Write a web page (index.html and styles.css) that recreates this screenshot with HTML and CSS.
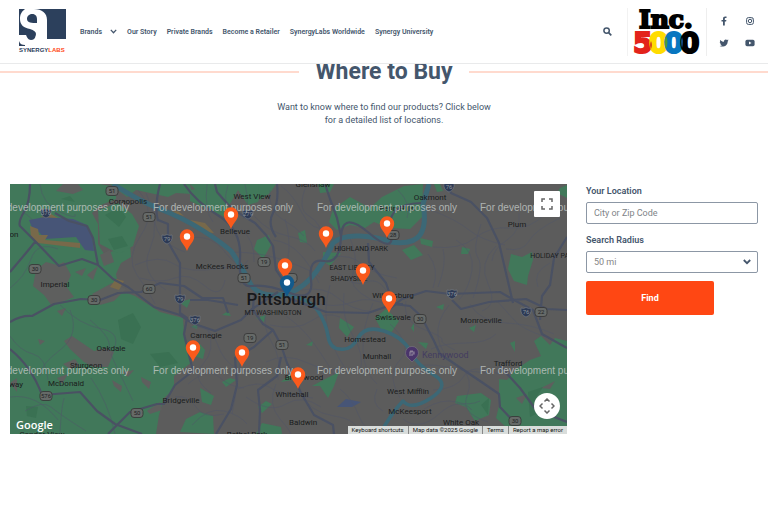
FILE: index.html
```html
<!DOCTYPE html>
<html lang="en">
<head>
<meta charset="utf-8">
<meta name="viewport" content="width=device-width, initial-scale=1">
<title>Where to Buy - SynergyLabs</title>
<link rel="stylesheet" href="styles.css">
</head>
<body>
<header class="site-header">
  <a class="brand" href="#" aria-label="SynergyLabs home">
    <svg class="brand-logo" viewBox="0 0 47 37" aria-hidden="true">
      <path d="M0 0H47V30H0ZM0 32C1 35 3 36 6 36V37H0Z" fill="#2c405c"/>
      <path d="M6 0C2 3 1 6 1 10C1 16 5 19 11 20C15 21 17 23 17 25C17 29 10 30 8 26L7 24H0V31H28V11C28 4 23 0 15 0Z" fill="#fff"/>
      <path d="M8 10C8 4 18 3 18 10V14C13 14 8 14 8 10ZM0 16C4 21 8 21 12 22C19 24 17 31 12 31C9 31 8 28 7 26H0Z" fill="#2c405c"/>
    </svg>
    <span class="brand-name">SYNERGY<b>LABS</b></span>
  </a>
  <nav class="main-nav" aria-label="Main">
    <a class="has-menu" href="#">Brands
      <svg class="caret" viewBox="0 0 7 5" aria-hidden="true"><path d="M.8.9 3.5 3.7 6.2.9" fill="none" stroke="#44566c" stroke-width="1.3"/></svg>
    </a>
    <a href="#">Our Story</a>
    <a href="#">Private Brands</a>
    <a href="#">Become a Retailer</a>
    <a href="#">SynergyLabs Worldwide</a>
    <a href="#">Synergy University</a>
  </nav>
  <button class="search-button" type="button" aria-label="Search">
    <svg viewBox="0 0 9 9" aria-hidden="true"><circle cx="3.6" cy="3.6" r="2.7" fill="none" stroke="#44566c" stroke-width="1.5"/><path d="M5.6 5.6 8.3 8.3" stroke="#44566c" stroke-width="1.7"/></svg>
  </button>
  <div class="award">
    <svg viewBox="0 0 66 48" role="img" aria-label="Inc. 5000">
      <text class="inc" x="5" y="20">Inc.</text>
      <g class="digits">
        <text x="-1" y="45" fill="#e3231b" stroke="#e3231b">5</text>
        <text x="15" y="45" fill="#ffdc00" stroke="#ffdc00">0</text>
        <text x="30" y="45" fill="#0876c0" stroke="#0876c0">0</text>
        <text x="46" y="45" fill="#000" stroke="#000">0</text>
      </g>
      <path d="M32 28Q35 34 32 41Q29 34 32 28Z" fill="#4c9c38"/>
      <path d="M17 33Q19 37 17 41Q15 37 17 33Z" fill="#d2481c"/>
      <path d="M48 29Q50 34 48 40Q46 34 48 29Z" fill="#124a80"/>
    </svg>
  </div>
  <div class="social">
    <a href="#" aria-label="Facebook"><svg viewBox="0 0 10 10"><path d="M4 9.5V5.6H2.5V4H4V2.8C4 1.2 4.9.5 6.2.5L7.5.6V2H6.7C6 2 5.8 2.4 5.8 2.9V4H7.4L7.1 5.6H5.8V9.5Z" fill="#44566c"/></svg></a>
    <a href="#" aria-label="Instagram"><svg viewBox="0 0 10 10"><rect x="1.6" y="1.6" width="6.8" height="6.8" rx="1.8" fill="none" stroke="#44566c"/><circle cx="5" cy="5" r="1.7" fill="none" stroke="#44566c"/><circle cx="7" cy="3" r=".5" fill="#44566c"/></svg></a>
    <a href="#" aria-label="Twitter"><svg viewBox="0 0 10 10"><path d="M1.2 1.9C2.3 3.1 3.5 3.7 4.9 3.8C4.6 1.5 7 .7 8.1 2L9.4 1.6 8.7 2.7 9.6 2.5 8.7 3.4C8.7 7.5 4.5 9.8.6 8 1.8 8 2.6 7.7 3.2 7.3 2.2 7.2 1.7 6.6 1.5 6H2.2C1.2 5.6.8 4.9.8 4L1.6 4.3C.8 3.6.8 2.7 1.2 1.9Z" fill="#44566c"/></svg></a>
    <a href="#" aria-label="YouTube"><svg viewBox="0 0 10 10"><rect x=".4" y="1.8" width="9.2" height="6.4" rx="1.6" fill="#44566c"/><path d="M4 3.6 6.5 5 4 6.4Z" fill="#fff"/></svg></a>
  </div>
</header>

<main>
  <section class="intro">
    <h1>Where to Buy</h1>
    <p>Want to know where to find our products? Click below for a detailed list of locations.</p>
  </section>

  <section class="locator">
    <div class="map">
      <svg class="map-canvas" viewBox="10 184 557 250" preserveAspectRatio="xMidYMid slice" role="img" aria-label="Map of stores around Pittsburgh">
        <defs>
          <g id="pin"><path d="M0 14C-2 8-7.200 5-7.200-.5A7.200 7.200 0 0 1 7.200-.5C7.200 5 2 8 0 14Z"/><circle r="3.200" cy="-.5" fill="#fff"/></g>
          <path id="shield" d="M-5-4Q-2.500-3 0-4.500Q2.500-3 5-4Q6 3 0 5Q-6 3-5-4Z" fill="#2d3a55" stroke="#777e86" stroke-width=".6"/>
          <rect id="route" x="-6" y="-4.500" width="12" height="9" rx="3" fill="#666a68" stroke="#333" stroke-width=".8"/>
        </defs>
        <rect x="10" y="184" width="557" height="250" fill="#5c5c5c"/>
        <g fill="#41785a">
          <path d="M10 184H100L116 187 116 199 101 205 92 213 98 224 98 244 104 254 117 250 130 243 131 257 121 263 116 274 119 290 135 296 160 312 183 318 184 334 188 355 192 362 174 376 174 389 164 398 159 415 156 434H10Z"/>
          <path d="M110 184H190L192 194 176 193 168 197 150 193 136 190 127 197Z"/>
          <path d="M98 210 118 203 132 214 139 226 133 246 119 254 100 244Z"/>
          <path d="M190 184H265L258 202 248 205 238 190 230 204 218 206 206 200Z"/>
          <path d="M190 190 211 187 226 205 236 214 225 217 203 207 190 201ZM258 184H276L270 193 260 200ZM318 184H334L330 192 320 193ZM333 209 350 197 370 208 382 197 404 186 423 184 422 217 410 229 389 228 374 222 365 228 350 225 337 230 329 222Z"/>
          <path d="M257 240 269 235 271 245 263 259 254 249ZM323 252 341 253 330 266 323 261ZM402 250 414 245 423 255 411 260ZM420 238 433 241 432 247 421 244ZM462 247 470 249 468 254 461 254ZM511 254 522 257 532 252 533 260 528 276 527 285 514 281 508 269ZM298 233 305 230 307 243 300 242Z"/>
          <path d="M340 318 354 327 347 337 339 328ZM306 345 313 341 312 346ZM312 386 329 377 339 372 334 386 328 398 320 386ZM375 318 386 309 399 321 391 333 382 331ZM418 342 428 343 426 349ZM457 396 481 393 491 400 489 415 475 421 466 407 455 403ZM469 328 476 325 474 332ZM510 343 515 341 515 352Z"/>
          <path d="M534 341 541 336 550 345 555 338 567 341V434H519L506 427 496 418 499 406 499 379 507 380 515 370 530 360 541 356Z"/>
          <path d="M191 345 200 344 205 350 203 359 194 356ZM191 327 198 323 197 329ZM200 388 214 396 211 405 202 402ZM222 382 230 378 236 380 226 387ZM258 407 266 401 272 404 262 413ZM281 382 290 374 293 380ZM256 434 262 423 281 427 282 434ZM180 432 186 419 200 412 213 416 214 434ZM256 318 266 315 264 322ZM179 302 191 299 187 308ZM222 315 228 311 231 316ZM436 307 444 304 443 310ZM411 328 414 323 414 332ZM434 184 440 184 443 191 437 192ZM560 188 567 185V198L557 193Z"/>
        </g>
        <g fill="#5e5f5e">
          <path d="M36 270 46 262 57 265 64 262 71 275 66 286 74 297 52 306 44 295 33 286ZM64 341 72 336 94 351 105 348 114 352 108 367 93 367 84 362 70 349ZM75 272 86 268 82 276ZM87 275 98 266 93 280ZM57 311 66 308 62 316ZM100 255 110 250 114 262 104 266ZM92 294 112 283 126 289 114 301 100 305ZM40 218 52 215 56 218 48 221Z"/>
          <path d="M112 380 122 386 121 392 114 386ZM141 377 151 382 149 389 142 382ZM147 411 160 402 162 410 150 414ZM57 378 68 374 62 384ZM10 383 17 378V392ZM123 372 134 370 128 377ZM38 339 45 341 40 345ZM63 184 78 184 83 190 73 194 56 191ZM63 364 75 359 80 366 70 369Z"/>
          <path d="M541 388 555 381 550 389ZM516 398 527 394 522 404Z"/>
        </g>
        <g fill="#386d50" opacity=".7"><path d="M105 215 119 207 126 217 119 227ZM108 239 122 236 128 246 114 250ZM118 320 133 313 141 327 133 344 121 339ZM26 406 38 407 36 418 27 416ZM481 405 489 398 488 415ZM528 392 543 387 535 399 544 410 530 417ZM61 199 70 196 75 202ZM150 354 169 352 178 363 160 367Z"/></g>
        <path d="M29 220 45 217 73 219 87 225 92 237 94 251 85 250 80 243 76 237 45 239 39 232 33 230Z" fill="#475577"/>
        <path d="M40 217 51 214 58 218ZM30 226 38 229 39 235 48 235 45 240 80 243 80 248 38 243 31 238ZM110 287 116 279 124 281 119 290ZM190 220 205 223 214 233 203 232ZM169 212 178 211 184 216Z" fill="#78694a"/>
        <path d="M337 407 346 399 361 402 352 407Z" fill="#475577"/>
        <g fill="none" stroke="#50566a" stroke-width=".6" opacity=".8">
          <path d="M10 204Q22 209 33 220M40 184Q42 204 60 212T75 214M10 288Q25 277 31 259T58 249M10 336Q20 351 33 354T48 380M10 397Q37 393 58 420M60 305Q80 325 102 329T111 355L133 401M70 310Q80 335 60 350T40 376M90 320Q115 340 108 352M25 411Q43 400 51 407T86 431M60 434Q61 409 64 398M115 434Q108 402 91 378"/>
          <path d="M138 190Q157 212 141 235T137 275 155 304M146 193Q161 225 150 249T166 290M155 211Q151 240 185 252M135 265Q160 254 174 264T222 268 240 285M140 278Q161 284 175 278T205 286 225 280M182 240Q209 231 225 252T248 260M207 184Q204 211 213 222M228 185Q221 205 233 219M245 184Q251 209 243 219M270 190Q268 211 282 219T304 236M281 186Q293 194 302 213T331 229M307 184Q296 209 309 216T325 245M254 216Q268 232 288 236T315 251M241 229Q255 240 254 262M230 252Q263 252 289 262T320 277"/>
          <path d="M273 240Q289 242 300 254T319 283M285 219Q291 239 288 258M332 257Q351 254 362 264T397 278M337 272Q353 288 367 282T392 301M350 238Q359 259 353 273T370 299M301 290Q325 286 338 298T374 312M310 302Q335 309 353 302T390 307M330 285Q323 310 328 330T345 368M344 293Q341 317 353 336T360 372M373 303Q362 327 363 350T377 384M270 325Q297 331 311 321T340 317M286 316Q303 328 315 345T334 375M266 310Q262 327 272 343T278 380M266 362Q285 352 308 363T343 367M254 342Q241 351 239 370T232 414"/>
          <path d="M398 190Q412 204 407 218M431 210Q457 220 469 230T505 245M433 247Q460 250 475 238T510 228 546 213M428 254Q440 269 433 288M443 249Q447 264 438 287M456 240Q475 251 472 270T459 300M481 224Q472 250 478 258T473 298M496 246Q478 263 488 284T482 311M519 213Q521 231 507 240T492 261M560 218Q535 230 529 241T506 249M550 263Q532 272 538 287M497 301Q508 313 515 321T546 337M470 304Q480 322 506 323T554 334M449 305Q436 321 438 337T457 365"/>
          <path d="M406 301Q402 321 423 329T442 340 455 350M390 324Q414 346 400 360T400 398M431 349Q445 343 466 343T496 334M406 369Q425 362 446 367T488 373M433 390Q457 389 464 376T499 374M424 409Q442 398 456 402T480 401M403 419Q419 432 439 414T472 410M461 367Q474 379 467 396T488 422M190 327Q211 325 217 343T236 368 270 370M208 330Q216 350 203 364T211 393M188 384Q208 367 219 377T244 388M175 397Q189 395 196 407T224 414M192 425Q208 407 224 411T247 424M238 389Q260 380 269 387T313 398M246 397Q270 414 286 404T321 407M276 384Q267 404 280 419T290 434M300 391Q308 412 334 416T357 434M340 389Q352 398 359 416T375 426M377 389Q370 404 383 411"/>
        </g>
        <g fill="none" stroke="#3c6876" stroke-linejoin="round">
          <path d="M113 184Q137 200 160 209T202 230 231 251Q242 267 250 283T288 294Q305 287 316 272T333 243Q342 235 360 236T391 242Q413 245 420 235T423 204L429 184" stroke-width="5"/>
          <path d="M288 295Q310 299 318 311T328 336 340 349Q351 351 358 338T384 331 410 351 434 375 431 398 403 401Q392 412 380 434" stroke-width="3.500"/>
        </g>
        <g fill="none" stroke="#4a5163" stroke-width="2.200" stroke-linejoin="round">
          <path d="M30 184Q30 202 24 212T20 226L36 242 59 266 82 259 98 265 113 279 128 287 154 307 180 315 192 323 215 331 241 320 252 309 278 292M98 265 93 238 87 226 69 221 55 213M10 272 26 253 35 242M10 322Q22 315 32 316L54 304 81 299 100 300 118 293 141 292 160 283 184 286 202 298 223 298 228 313M10 349Q32 367 42 395L80 392 97 411 115 424 142 434M108 434 130 412 157 404 164 404 175 385 193 371 188 351 184 334 187 318 180 313 180 263 168 242 168 224 158 220"/>
          <path d="M160 184Q154 207 158 221M215 184 217 192 232 209 255 223 266 235 273 246 276 270 287 286 M277 184Q279 202 273 213T276 237M325 184 330 199 337 218 341 236M184 184Q196 202 219 216T240 259 252 286 290 293 311 280 324 261 341 237 369 233 391 230 421 203M368 243 369 262 386 283 393 304 403 304M447 184 451 193 471 202 487 218 499 243 513 303M567 237 554 258 550 285 542 296 540 320M390 309 402 299 426 291 450 294 500 292 514 300 533 310 542 334 567 348M452 300 461 309 489 302 526 299 547 309 567 310"/>
          <path d="M393 304 410 306 421 316 434 341 440 354 483 383 499 394 500 407 517 425 519 434M254 293 253 310 263 324 273 330 281 345 287 363 301 393 314 415 333 425 334 434M273 330 254 347 235 358 237 385 231 409 216 434M281 357 277 376 258 390 260 410 259 434M190 300 208 300 238 305M288 298 326 312 368 313 397 303M500 366 520 388 536 410 567 422"/>
        </g>
        <g class="route-labels">
          <use href="#route" x="112" y="191"/><text x="112" y="193">51</text>
          <use href="#route" x="149" y="217"/><text x="149" y="219">51</text>
          <use href="#route" x="35" y="269"/><text x="35" y="271">30</text>
          <use href="#route" x="94" y="300"/><text x="94" y="302">30</text>
          <use href="#route" x="149" y="289"/><text x="149" y="291">60</text>
          <use href="#route" x="46" y="396"/><text x="46" y="398">576</text>
          <use href="#route" x="137" y="413"/><text x="137" y="415">50</text>
          <use href="#route" x="264" y="262"/><text x="264" y="264">19</text>
          <use href="#route" x="244" y="278"/><text x="244" y="280">51</text>
          <use href="#route" x="250" y="338"/><text x="250" y="340">19</text>
          <use href="#route" x="282" y="345"/><text x="282" y="347">51</text>
          <use href="#route" x="291" y="278"/>
          <use href="#route" x="393" y="235"/><text x="393" y="237">28</text>
          <use href="#route" x="420" y="319"/><text x="420" y="321">30</text>
          <use href="#route" x="541" y="312"/><text x="541" y="314">22</text>
          <use href="#route" x="515" y="421"/><text x="515" y="423">30</text>
          <g class="interstate">
            <use href="#shield" x="46" y="213"/><text x="46" y="215">376</text>
            <use href="#shield" x="167" y="239"/><text x="167" y="241">79</text>
            <use href="#shield" x="180" y="299"/><text x="180" y="301">79</text>
            <use href="#shield" x="195" y="320"/><text x="195" y="322">376</text>
            <use href="#shield" x="248" y="214"/><text x="248" y="216">279</text>
            <use href="#shield" x="449" y="187"/><text x="449" y="189">76</text>
            <use href="#shield" x="452" y="294"/><text x="452" y="296">376</text>
            <use href="#shield" x="526" y="312"/><text x="526" y="314">76</text>
          </g>
        </g>
        <g class="places">
          <text x="128" y="204">Coraopolis</text><text x="14" y="237">on</text>
          <text x="55" y="287">Imperial</text><text x="111" y="351">Oakdale</text><text x="86" y="368">Sturgeon</text>
          <text x="66" y="386">McDonald</text><text x="16" y="387">way</text><text x="181" y="403">Bridgeville</text>
          <text x="42" y="437">Candor View</text><text x="206" y="338">Carnegie</text><text x="252" y="199">West View</text>
          <text x="235" y="234">Bellevue</text><text x="222" y="269">McKees Rocks</text><text x="313" y="187">Glenshaw</text>
          <text x="430" y="200">Oakmont</text><text x="397" y="211">Penn Hills</text><text x="517" y="227">Plum</text><text x="393" y="298">Wilkinsburg</text>
          <text x="393" y="320">Swissvale</text><text x="481" y="323">Monroeville</text><text x="365" y="342">Homestead</text>
          <text x="377" y="359">Munhall</text><text x="508" y="366">Trafford</text><text x="408" y="394">West Mifflin</text>
          <text x="410" y="414">McKeesport</text><text x="461" y="425">White Oak</text><text x="304" y="380">Brentwood</text>
          <text x="292" y="397">Whitehall</text><text x="303" y="425">Baldwin</text><text x="247" y="437">Bethel Park</text>
        </g>
        <g class="districts">
          <text x="361" y="251">HIGHLAND PARK</text><text x="352" y="270">EAST LIBERTY</text><text x="349" y="281">SHADYSIDE</text>
          <text x="273" y="315">MT WASHINGTON</text><text x="554" y="258">HOLIDAY PARK</text>
        </g>
        <text class="city" x="286" y="305">Pittsburgh</text>
        <g transform="translate(412 353)"><path d="M0 9 4 5A6.500 6.500 0 1 0-4 5Z" fill="#4a356b" stroke="#77717d" stroke-width=".7"/><path d="M-2 3V-1H2V1H0V3M-2-2H1" fill="none" stroke="#8d8299" stroke-width="1.200"/></g>
        <text class="park" x="422" y="358">Kennywood</text>
        <g class="watermark">
          <text x="-11" y="211">For development purposes only</text><text x="153" y="211">For development purposes only</text><text x="317" y="211">For development purposes only</text><text x="480" y="211">For development purposes only</text>
          <text x="-11" y="374">For development purposes only</text><text x="153" y="374">For development purposes only</text><text x="317" y="374">For development purposes only</text><text x="480" y="374">For development purposes only</text>
        </g>
        <g class="pins" fill="#fa5a1c">
          <use href="#pin" x="231" y="215"/><use href="#pin" x="187" y="237"/><use href="#pin" x="326" y="234"/><use href="#pin" x="387" y="224"/>
          <use href="#pin" x="285" y="266"/><use href="#pin" x="363" y="271"/><use href="#pin" x="389" y="299"/>
          <use href="#pin" x="193" y="348"/><use href="#pin" x="242" y="353"/><use href="#pin" x="298" y="375"/>
          <use href="#pin" x="287" y="283" fill="#125a8c"/>
        </g>
      </svg>
      <button class="map-control fullscreen" type="button" aria-label="Toggle fullscreen view"><svg viewBox="0 0 12 12"><path d="M1 4V1H4M8 1H11V4M11 8V11H8M4 11H1V8" fill="none" stroke="#666" stroke-width="1.500"/></svg></button>
      <button class="map-control camera" type="button" aria-label="Map camera controls"><svg viewBox="0 0 16 16"><path d="M5.500 3.500 8 1 10.500 3.500M12.500 5.500 15 8 12.500 10.500M10.500 12.500 8 15 5.500 12.500M3.500 10.500 1 8 3.500 5.500" fill="none" stroke="#666" stroke-width="1.500"/></svg></button>
      <a class="google" href="#">Google</a>
      <div class="map-legal"><button type="button">Keyboard shortcuts</button><span>Map data ©2025 Google</span><a href="#">Terms</a><a href="#">Report a map error</a></div>
    </div>
    <form class="search-form">
      <label for="location">Your Location</label>
      <input id="location" type="text" placeholder="City or Zip Code">
      <label for="radius">Search Radius</label>
      <div class="select-wrap">
        <select id="radius"><option>50 mi</option></select>
        <svg class="select-caret" viewBox="0 0 8 6" aria-hidden="true"><path d="M.8 1 4 4.200 7.200 1" fill="none" stroke="#44566c" stroke-width="1.800"/></svg>
      </div>
      <button class="find" type="submit">Find</button>
    </form>
  </section>
</main>
</body>
</html>
```
FILE: styles.css
```css
* { box-sizing: border-box; }
body { margin: 0; background: #fff; color: #44566c; font-family: Roboto, "Liberation Sans", sans-serif; }
a { color: inherit; text-decoration: none; }
button { padding: 0; border: 0; font-family: inherit; cursor: pointer; }
svg { display: block; }

.site-header { position: sticky; top: 0; z-index: 5; display: flex; align-items: center; height: 64px; padding: 0 13px 0 19px; background: #fff; border-bottom: 1px solid #e9eaeb; }
.brand { display: flex; flex-direction: column; width: 47px; }
.brand-logo { width: 47px; height: 37px; }
.brand-name { font: 700 6px/8px "Liberation Sans", sans-serif; color: #2c405c; white-space: nowrap; }
.brand-name b { color: #ff4713; }
.main-nav { display: flex; align-items: center; gap: 10px; margin-left: 14px; font-size: 7px; font-weight: 600; line-height: 12px; white-space: nowrap; }
.has-menu { display: flex; align-items: center; gap: 8px; }
.caret { width: 7px; height: 5px; }
.search-button { margin-left: auto; background: none; }
.search-button svg { width: 9px; height: 9px; }
.award { display: flex; margin-left: 15px; padding: 0 6px; border-left: 1px solid #f2f2f2; border-right: 1px solid #eee; }
.award svg { width: 66px; height: 48px; overflow: visible; }
.inc { font: 700 25px "DejaVu Serif", serif; stroke: #000; stroke-width: 2; }
.digits { font: 700 28px "DejaVu Sans", sans-serif; stroke-width: 2; }
.social { display: grid; grid-template-columns: 10px 10px; gap: 12px 16px; margin-left: 12px; }
.social svg { width: 10px; height: 10px; }

.intro { text-align: center; }
.intro h1 { display: flex; align-items: center; gap: 16px; margin: -6px 0 0; font-size: 23px; line-height: 28px; font-weight: 700; }
.intro h1::before, .intro h1::after { content: ""; flex: 1; height: 2px; background: #ffdace; }
.intro p { max-width: 220px; margin: 15px auto 0; font-size: 9px; line-height: 13px; }

.locator { display: grid; grid-template-columns: 1fr 172px; gap: 19px; margin-top: 57px; padding: 0 10px; align-items: start; }
.map { position: relative; overflow: hidden; }
.map-canvas { width: 100%; min-height: 250px; font-family: Roboto, sans-serif; }
.places { font-size: 8px; fill: #1b1c1d; text-anchor: middle; }
.districts { font-size: 7px; fill: #1b1c1d; text-anchor: middle; }
.city { font-size: 17px; font-weight: 500; fill: #17181a; text-anchor: middle; }
.park { font-size: 9px; fill: #443c60; }
.watermark { font: 10px "Liberation Sans", sans-serif; fill: #c4cac7; opacity: .8; }
.route-labels { font-size: 6px; fill: #202224; text-anchor: middle; }
.interstate { fill: #8e949c; }
.map-control { position: absolute; right: 7px; display: grid; place-items: center; width: 26px; height: 26px; background: #fff; }
.fullscreen { top: 7px; border-radius: 1px; }
.fullscreen svg { width: 12px; height: 12px; }
.camera { bottom: 15px; border-radius: 50%; }
.camera svg { width: 16px; height: 16px; }
.google { position: absolute; left: 6px; bottom: 2px; color: #fff; font: 600 11px/14px "Open Sans", sans-serif; }
.map-legal { position: absolute; right: 0; bottom: 0; display: flex; height: 8px; background: #d9dddb; color: #111; font-size: 6px; line-height: 8px; white-space: nowrap; }
.map-legal > * { padding: 0 4px; background: none; font-size: 6px; line-height: 8px; color: #111; }
.map-legal > * + * { border-left: 1px solid #888; }

.search-form { display: flex; flex-direction: column; padding-top: 1px; }
.search-form label { font-size: 9px; line-height: 12px; font-weight: 600; margin-bottom: 5px; }
.search-form input, .search-form select { display: block; width: 100%; height: 22px; padding: 0 7px; border: 1px solid #8c97a5; border-radius: 2px; background: #fff; color: #858585; font: 9px Roboto, sans-serif; appearance: none; }
.search-form input { margin-bottom: 10px; }
.search-form input::placeholder { color: #808488; opacity: 1; }
.select-wrap { position: relative; }
.select-caret { position: absolute; right: 7px; top: 8px; width: 8px; height: 6px; pointer-events: none; }
.find { width: 128px; height: 34px; margin-top: 8px; border-radius: 2px; background: #ff4713; color: #fff; font-size: 9px; font-weight: 700; }
```
